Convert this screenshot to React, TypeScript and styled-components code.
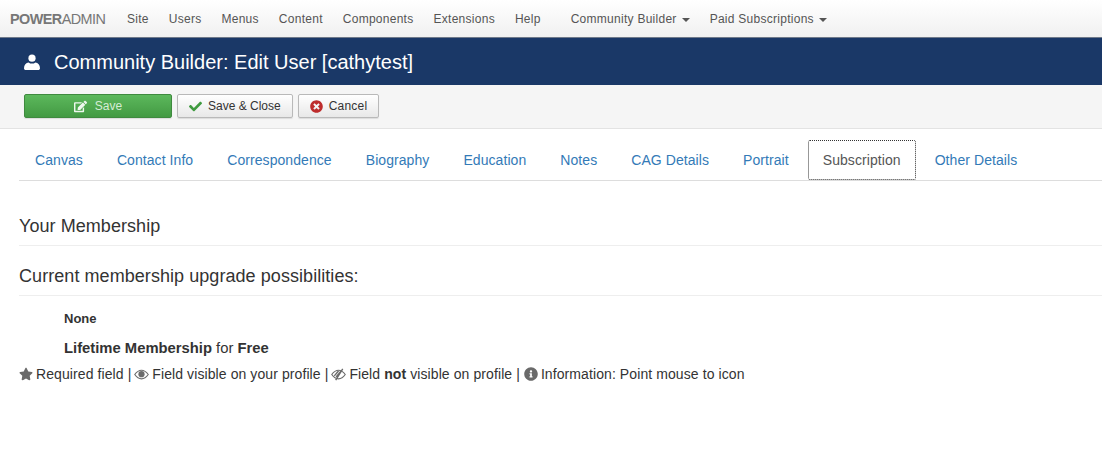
import React from "react";
import styled, { createGlobalStyle } from "styled-components";
import { FaEdit, FaCheck, FaTimesCircle, FaStar, FaInfoCircle } from "react-icons/fa";

const Global = createGlobalStyle`
  html, body { margin: 0; padding: 0; background: #fff; overflow: hidden; }
  body { font-family: "Liberation Sans", Arial, sans-serif; font-size: 14px; line-height: 20px; color: #333; }
`;

const Page = styled.div`
  width: 1102px;
  height: 465px;
`;

const NavBar = styled.nav`
  height: 37px;
  padding-bottom: 1px;
  box-sizing: content-box;
  display: flex;
  align-items: center;
  background: linear-gradient(to bottom, #ffffff, #f0f0f0);
  box-shadow: inset 0 -1px 0 #6f7a8a;
`;

const Brand = styled.span`
  margin-left: 10px;
  width: 117px;
  font-size: 15.5px;
  color: #777;
  letter-spacing: -0.6px;
  flex: none;
  display: inline-block;
  transform: scaleX(0.93);
  transform-origin: left center;
  white-space: nowrap;
  b { font-weight: 700; }
`;

const NavItem = styled.a<{ $gap?: number }>`
  font-size: 12px;
  letter-spacing: 0.27px;
  color: #555;
  margin-right: ${(p) => p.$gap ?? 20}px;
  display: inline-flex;
  align-items: center;
  white-space: nowrap;
`;

const Caret = styled.i`
  display: inline-block;
  width: 0;
  height: 0;
  margin-left: 5px;
  margin-top: 2px;
  border-top: 4px solid #555;
  border-left: 4px solid transparent;
  border-right: 4px solid transparent;
`;

const TitleBar = styled.header`
  height: 47px;
  background: #1a3867;
  color: #fff;
  display: flex;
  align-items: center;
  padding-left: 24px;
  font-size: 20px;
  gap: 14px;
`;

const UserGlyph = styled.svg`
  width: 16px;
  height: 16px;
  flex: none;
  fill: #fff;
`;

const Toolbar = styled.div`
  height: 44px;
  box-sizing: border-box;
  background: #f5f5f5;
  border-bottom: 1px solid #e3e3e3;
  padding: 9px 0 0 24px;
  display: flex;
  align-items: flex-start;
  gap: 5px;
`;

const Button = styled.button<{ $primary?: boolean }>`
  height: 24px;
  box-sizing: border-box;
  padding: 0 11px;
  border-radius: 2px;
  font: 12px "Liberation Sans", Arial, sans-serif;
  display: inline-flex;
  align-items: center;
  justify-content: center;
  gap: 6px;
  width: ${(p) => (p.$primary ? "148px" : "auto")};
  color: ${(p) => (p.$primary ? "#d5ecd5" : "#333")};
  border: 1px solid ${(p) => (p.$primary ? "#3f8a3f" : "#b9b9b9")};
  background: ${(p) =>
    p.$primary ? "linear-gradient(to bottom, #5cb85c, #439a43)" : "linear-gradient(to bottom, #ffffff, #e8e8e8)"};
  box-shadow: 0 1px 1px rgba(0, 0, 0, 0.1);
`;

const SaveButton = styled(Button)`
  gap: 8px;
`;

const CancelButton = styled(Button)`
  letter-spacing: 0.2px;
`;

const BtnIcon = styled.span<{ $color: string }>`
  color: ${(p) => p.$color};
  display: inline-flex;
  font-size: 13px;
`;

const Content = styled.main`
  padding: 11px 0 0 19px;
`;

const Tabs = styled.ul`
  list-style: none;
  margin: 0;
  padding: 0 0 0 1px;
  display: flex;
  height: 41px;
  box-sizing: border-box;
  border-bottom: 1px solid #ddd;
`;

const Tab = styled.li<{ $active?: boolean }>`
  height: 40px;
  box-sizing: border-box;
  padding: 9px 14px 0;
  margin-right: 4px;
  color: ${(p) => (p.$active ? "#555" : "#337ab7")};
  font-size: 14px;
  letter-spacing: 0.07px;
  border-radius: 2px;
  white-space: nowrap;
  border: 1px ${(p) => (p.$active ? "dotted #333" : "solid transparent")};
`;

const SectionTitle = styled.div<{ $top: number }>`
  margin-top: ${(p) => p.$top}px;
  font-size: 18px;
  letter-spacing: 0.06px;
  padding-bottom: 9px;
  line-height: 20px;
  border-bottom: 1px solid #eee;
  color: #333;
`;

const Line = styled.div<{ $top: number; $size: number }>`
  margin: ${(p) => p.$top}px 0 0 45px;
  font-size: ${(p) => p.$size}px;
  line-height: 20px;
  b { font-weight: 700; }
`;

const Legend = styled.div`
  margin-top: 6px;
  font-size: 14px;
  letter-spacing: 0.09px;
  line-height: 20px;
  display: flex;
  align-items: center;
  white-space: pre;
  b { font-weight: 700; }
  svg { color: #6a6a6a; font-size: 14px; flex: none; margin-right: 3px; }
`;

const EyeGlyph = styled.svg`
  width: 15px;
  height: 15px;
  margin-left: -1px;
`;

const Eye: React.FC = () => (
  <EyeGlyph viewBox="0 0 16 16" fill="none" stroke="currentColor">
    <path d="M0.8 8C3 4.9 5.3 3.4 8 3.4S13 4.9 15.2 8C13 11.1 10.7 12.6 8 12.6S3 11.1 0.8 8Z" strokeWidth="1.2" />
    <circle cx="8" cy="7.6" r="3.3" fill="currentColor" stroke="none" />
  </EyeGlyph>
);

const EyeOff: React.FC = () => (
  <EyeGlyph viewBox="0 0 16 16" fill="none" stroke="currentColor">
    <path d="M0.8 8C3 4.9 5.3 3.4 8 3.4S13 4.9 15.2 8C13 11.1 10.7 12.6 8 12.6S3 11.1 0.8 8Z" strokeWidth="1.2" />
    <path d="M3.5 9.5 8 4.2M5.5 10.5 10.5 4.6M5 14 12.5 2" strokeWidth="1.5" />
  </EyeGlyph>
);

const App: React.FC = () => (
  <Page>
    <Global />
    <NavBar>
      <Brand><b>POWER</b>ADMIN</Brand>
      {["Site", "Users", "Menus", "Content", "Components", "Extensions"].map((n) => (
        <NavItem key={n}>{n}</NavItem>
      ))}
      <NavItem $gap={30}>Help</NavItem>
      <NavItem>Community Builder<Caret /></NavItem>
      <NavItem>Paid Subscriptions<Caret /></NavItem>
    </NavBar>
    <TitleBar>
      <UserGlyph viewBox="0 0 16 16">
        <circle cx="8" cy="4.2" r="3.6" />
        <path d="M0 14.2C0 10.8 2 8.8 4.6 8.4 5.6 9.2 6.7 9.6 8 9.6S10.4 9.2 11.4 8.4C14 8.8 16 10.8 16 14.2 16 15.3 15.2 16 14.2 16H1.8C.8 16 0 15.3 0 14.2Z" />
      </UserGlyph>
      Community Builder: Edit User [cathytest]
    </TitleBar>
    <Toolbar>
      <SaveButton $primary><BtnIcon $color="#eef7ee"><FaEdit /></BtnIcon>Save</SaveButton>
      <Button><BtnIcon $color="#3f9a3f"><FaCheck /></BtnIcon>Save &amp; Close</Button>
      <CancelButton><BtnIcon $color="#bd2c2c"><FaTimesCircle /></BtnIcon>Cancel</CancelButton>
    </Toolbar>
    <Content>
      <Tabs>
        {["Canvas", "Contact Info", "Correspondence", "Biography", "Education", "Notes", "CAG Details", "Portrait"].map((t) => (
          <Tab key={t}>{t}</Tab>
        ))}
        <Tab $active>Subscription</Tab>
        <Tab>Other Details</Tab>
      </Tabs>
      <SectionTitle $top={35}>Your Membership</SectionTitle>
      <SectionTitle $top={20}>Current membership upgrade possibilities:</SectionTitle>
      <Line $top={13} $size={13}><b>None</b></Line>
      <Line $top={9} $size={14.8}><b>Lifetime Membership</b> for <b>Free</b></Line>
      <Legend>
        <FaStar />Required field | <Eye />Field visible on your profile | <EyeOff />Field <b>not</b> visible on profile | <FaInfoCircle />Information: Point mouse to icon
      </Legend>
    </Content>
  </Page>
);

export default App;
